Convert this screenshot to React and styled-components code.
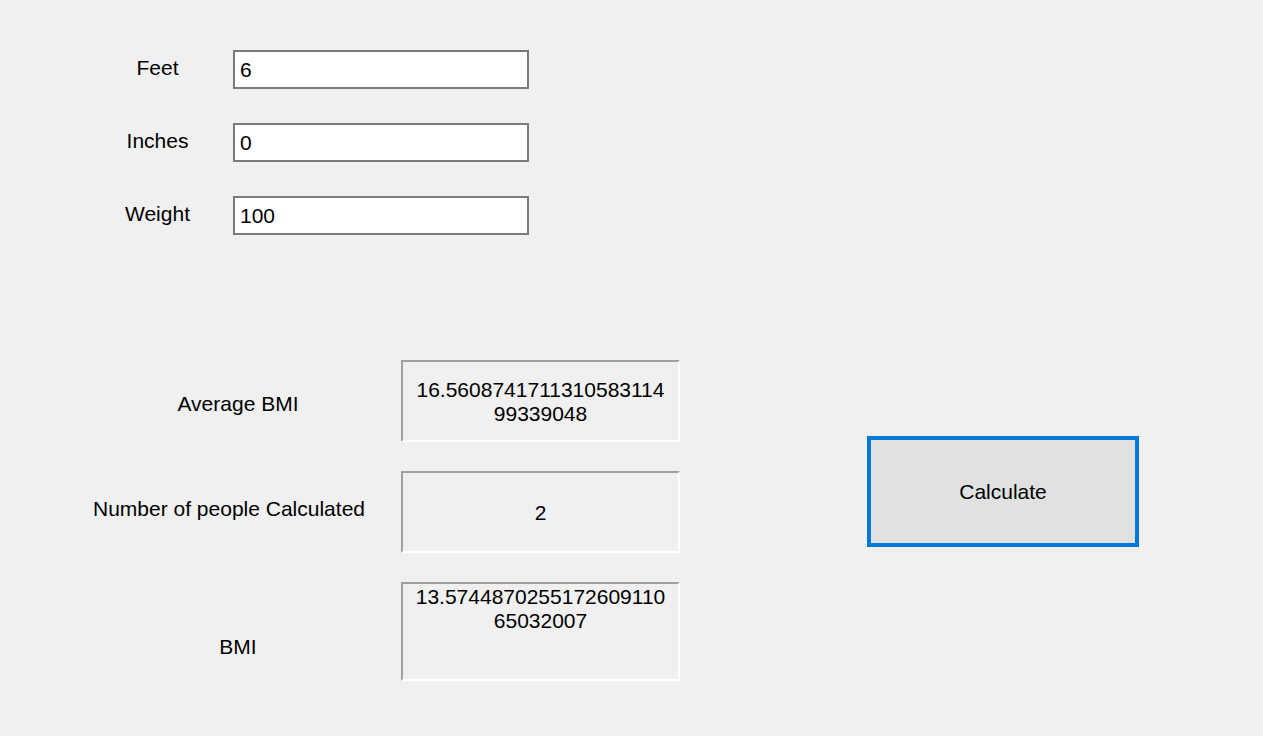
import styled, { createGlobalStyle } from "styled-components";

const GlobalStyle = createGlobalStyle`
  html, body {
    margin: 0;
    padding: 0;
    background: #f0f0f0;
    font-family: "Liberation Sans", Arial, sans-serif;
    color: #000;
  }
`;

const INPUTS = [
  { label: "Feet", value: "6" },
  { label: "Inches", value: "0" },
  { label: "Weight", value: "100" },
];

const RESULTS = [
  {
    label: "Average BMI",
    value: "16.5608741711310583114\n99339048",
    height: 82,
    valign: "center",
    nudge: 3,
  },
  {
    label: "Number of people Calculated",
    value: "2",
    height: 82,
    valign: "center",
    shift: 18,
    nudge: -3,
  },
  {
    label: "BMI",
    value: "13.5744870255172609110\n65032007",
    height: 99,
    valign: "flex-start",
    top: 53,
  },
];

export default function App() {
  return (
    <>
      <GlobalStyle />
      <WindowStyle>
        <InputGridStyle>
          {INPUTS.map((item) => (
            <InputRow key={item.label}>
              <InputLabel>{item.label}</InputLabel>
              <TextBox defaultValue={item.value} />
            </InputRow>
          ))}
        </InputGridStyle>

        <BottomStyle>
          <ResultGridStyle>
            {RESULTS.map((item) => (
              <ResultRow key={item.label}>
                <ResultLabel
                  $shift={item.shift || 0}
                  $top={item.top}
                  $nudge={item.nudge || 0}
                >
                  {item.label}
                </ResultLabel>
                <OutputBox $height={item.height} $valign={item.valign}>
                  {item.value}
                </OutputBox>
              </ResultRow>
            ))}
          </ResultGridStyle>
          <CalcButton>Calculate</CalcButton>
        </BottomStyle>
      </WindowStyle>
    </>
  );
}

const WindowStyle = styled.div`
  width: 1263px;
  height: 736px;
  box-sizing: border-box;
  padding-top: 50px;
  font-size: 21px;
`;

const InputGridStyle = styled.div`
  display: flex;
  flex-direction: column;
  gap: 34px;
  padding-left: 100px;
`;

const InputRow = styled.div`
  display: grid;
  grid-template-columns: 115px 296px;
  column-gap: 18px;
  align-items: center;
  height: 39px;
`;

const InputLabel = styled.div`
  text-align: center;
  line-height: 24px;
  transform: translateY(-2px);
`;

const TextBox = styled.input`
  box-sizing: border-box;
  width: 296px;
  height: 39px;
  border: 2px solid #7a7a7a;
  background: #fff;
  padding: 0 5px;
  font-family: "Liberation Sans", Arial, sans-serif;
  font-size: 21px;
  color: #000;
  outline: none;
`;

const BottomStyle = styled.div`
  display: flex;
  align-items: flex-start;
  margin-top: 125px;
`;

const ResultGridStyle = styled.div`
  display: flex;
  flex-direction: column;
  gap: 29px;
  padding-left: 78px;
`;

const ResultRow = styled.div`
  display: grid;
  grid-template-columns: 320px 279px;
  column-gap: 3px;
`;

const ResultLabel = styled.div`
  text-align: center;
  line-height: 24px;
  padding-right: ${(p) => p.$shift}px;
  align-self: ${(p) => (p.$top ? "start" : "center")};
  padding-top: ${(p) => p.$top || 0}px;
  transform: translateY(${(p) => p.$nudge}px);
`;

const OutputBox = styled.div`
  box-sizing: border-box;
  height: ${(p) => p.$height}px;
  border-top: 2px solid #a0a0a0;
  border-left: 2px solid #a0a0a0;
  border-bottom: 2px solid #fff;
  border-right: 2px solid #fff;
  display: flex;
  flex-direction: column;
  justify-content: ${(p) => p.$valign};
  text-align: center;
  white-space: pre-line;
  line-height: 24px;
  padding-top: 1px;
`;

const CalcButton = styled.button`
  box-sizing: border-box;
  margin-left: 187px;
  margin-top: 76px;
  width: 272px;
  height: 111px;
  border: 4px solid #0078d7;
  background: #e1e1e1;
  font-family: "Liberation Sans", Arial, sans-serif;
  font-size: 21px;
  color: #000;
  padding: 0;
`;
